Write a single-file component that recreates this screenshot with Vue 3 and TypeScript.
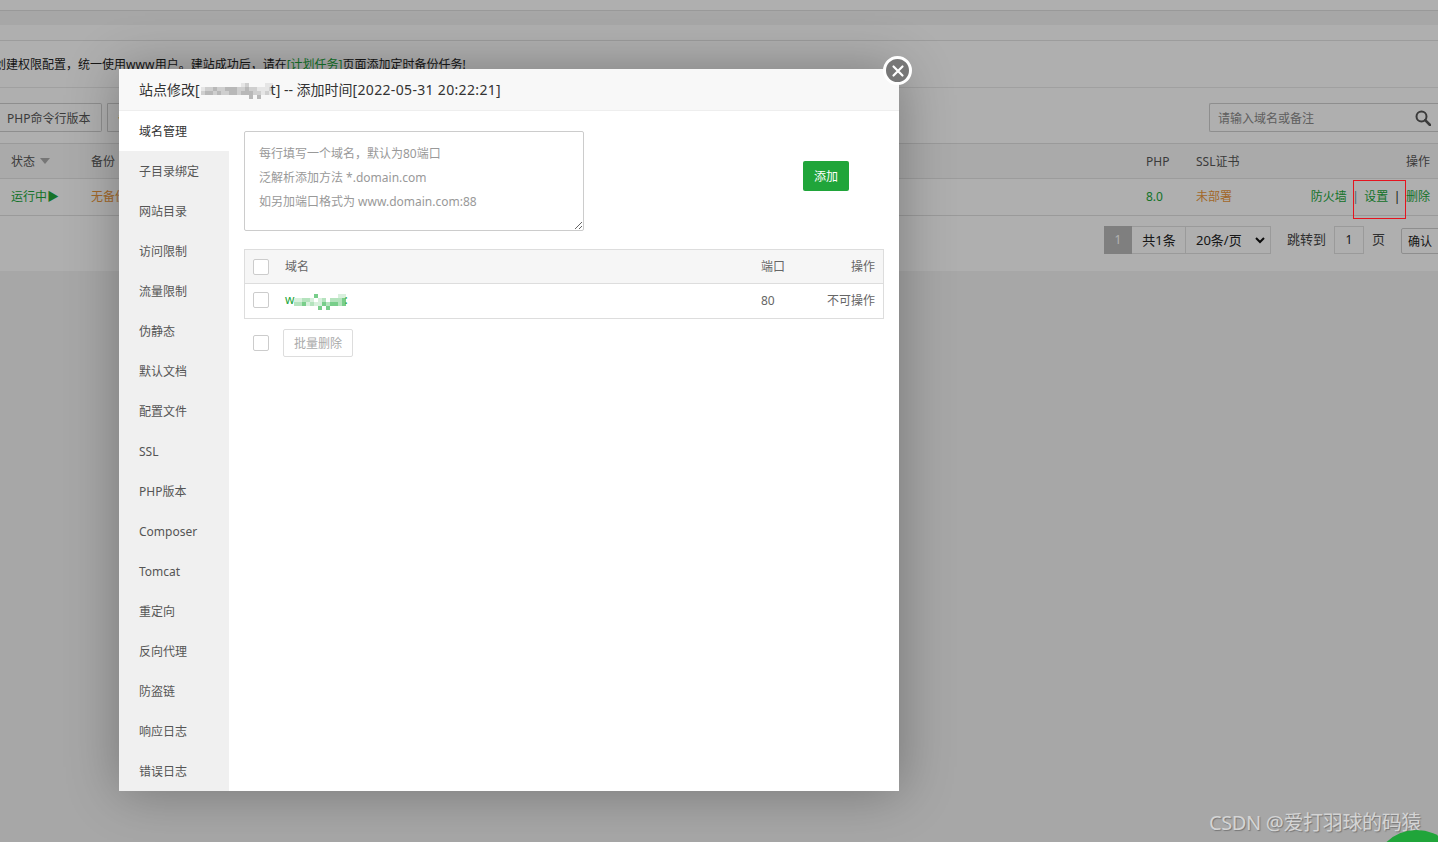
<script setup lang="ts">
const menu: string[] = ['域名管理','子目录绑定','网站目录','访问限制','流量限制','伪静态','默认文档','配置文件','SSL','PHP版本','Composer','Tomcat','重定向','反向代理','防盗链','响应日志','错误日志']
const placeholder = '每行填写一个域名，默认为80端口\n泛解析添加方法 *.domain.com\n如另加端口格式为 www.domain.com:88'

const greys: Record<string, string> = { '.': 'transparent', a: '#e6e6e6', b: '#cfcfcf', c: '#b8b8b8' }
const greens: Record<string, string> = { '.': 'transparent', a: '#d8f0dd', b: '#b4e3bd', c: '#78ce8a' }
const cells = (rows: string[], palette: Record<string, string>): string[] =>
  rows.join('').split('').map((k) => palette[k])
const titleCells = cells(['..........ab....aa', 'abbcbbcccbbcbbaaab', 'bccbcbbccbcccbbaba', '............c.c...'], greys)
const domainCells = cells(['.....c.....aa', 'aabba.ab.bbbc', 'bbcabaacbccbc', '......c.c....'], greens)
</script>

<template>
  <div class="page">
    <div class="strip s1"></div>
    <div class="strip s2"></div>
    <div class="strip s3"></div>
    <div class="notice">创建权限配置，统一使用<span class="www">www</span>用户。建站成功后，请在<span class="link">[计划任务]</span>页面添加定时备份任务!</div>
    <div class="toolbar">
      <div class="tool-btn">PHP命令行版本</div>
      <div class="tool-btn second">备份</div>
      <div class="search">
        <span>请输入域名或备注</span>
        <svg width="16" height="16" viewBox="0 0 16 16" class="search-icon"><circle cx="6.5" cy="6.5" r="5" fill="none" stroke="#555" stroke-width="2"/><path d="M10.2 10.2 15 15" stroke="#555" stroke-width="2.6" stroke-linecap="round"/></svg>
      </div>
    </div>
    <div class="thead">
      <span class="c-status">状态<i class="caret"></i></span>
      <span class="c-backup">备份</span>
      <span class="c-php">PHP</span>
      <span class="c-ssl">SSL证书</span>
      <span class="c-op">操作</span>
    </div>
    <div class="trow">
      <span class="c-status green">运行中▶</span>
      <span class="c-backup orange">无备份</span>
      <span class="c-php green">8.0</span>
      <span class="c-ssl orange">未部署</span>
      <span class="c-op"><span class="green">防火墙</span><span class="sep">|</span><span class="green">设置</span><span class="sep dark">|</span><span class="green">删除</span></span>
    </div>
    <div class="pager">
      <span class="p-cur">1</span>
      <span class="p-total">共1条</span>
      <span class="p-select">20条/页
        <svg width="10" height="7" viewBox="0 0 10 7"><path d="M1 1l4 4 4-4" fill="none" stroke="#111" stroke-width="2"/></svg>
      </span>
      <span class="p-jump">跳转到</span>
      <span class="p-input">1</span>
      <span class="p-unit">页</span>
      <span class="p-ok">确认</span>
    </div>

    <div class="overlay"></div>
    <div class="annot"></div>

    <div class="modal">
      <div class="m-title">站点修改[<span class="mosaic title-mosaic"><i v-for="(c, i) in titleCells" :key="i" :style="{ background: c }"></i></span>t] -- 添加时间<span class="date">[2022-05-31 20:22:21]</span></div>
      <div class="m-body">
        <ul class="side">
          <li v-for="(m, i) in menu" :key="m" :class="{ on: i === 0 }">{{ m }}</li>
        </ul>
        <div class="main">
          <div class="add-row">
            <textarea class="domains" readonly :placeholder="placeholder"></textarea>
            <div class="add-btn">添加</div>
          </div>
          <div class="dtable">
            <div class="d-head">
              <i class="check"></i>
              <span class="d-name">域名</span>
              <span class="d-port">端口</span>
              <span class="d-op">操作</span>
            </div>
            <div class="d-row">
              <i class="check"></i>
              <span class="d-name dom">w<span class="mosaic dom-mosaic"><i v-for="(c, i) in domainCells" :key="i" :style="{ background: c }"></i></span>:</span>
              <span class="d-port">80</span>
              <span class="d-op">不可操作</span>
            </div>
          </div>
          <div class="batch">
            <i class="check"></i>
            <span class="batch-btn">批量删除</span>
          </div>
        </div>
      </div>
    </div>
    <div class="close">
      <svg width="14" height="14" viewBox="0 0 14 14"><path d="M2.5 2.5l9 9M11.5 2.5l-9 9" stroke="#fff" stroke-width="2.2" stroke-linecap="round"/></svg>
    </div>
    <div class="watermark">CSDN @爱打羽球的码猿</div>
    <div class="fab"></div>
  </div>
</template>

<style scoped>
.page {
  position: relative;
  width: 1438px;
  height: 842px;
  overflow: hidden;
  background: #efefef;
  font-family: "Noto Sans", "Noto Sans CJK SC", sans-serif;
  font-size: 12px;
  color: #444;
}
.strip { box-sizing: border-box; }
.s1 { height: 11px; background: #fbfbfb; border-bottom: 1px solid #dcdcdc; }
.s2 { height: 14px; background: #f0f0f0; }
.s3 { height: 16px; background: #fbfbfb; border-bottom: 1px solid #e0e0e0; }
.notice {
  box-sizing: border-box;
  height: 47px;
  padding-top: 15px;
  margin-left: -6px;
  line-height: 18px;
  background: #fbfbfb;
  border-bottom: 1px solid #e6e6e6;
  color: #222;
  white-space: nowrap;
  width: 1444px;
}
.www { letter-spacing: 0.1px; }
.link { color: #20a53a; }
.toolbar {
  box-sizing: border-box;
  height: 56px;
  background: #fbfbfb;
  display: flex;
  align-items: flex-start;
  padding-top: 15px;
  border-bottom: 1px solid #ddd;
}
.tool-btn {
  box-sizing: border-box;
  height: 29px;
  line-height: 29px;
  padding: 0 10px 0 7px;
  border: 1px solid #ccc;
  border-left: 0;
  border-radius: 0 2px 2px 0;
  color: #555;
  width: 102px;
}
.tool-btn.second { margin-left: 5px; width: 60px; border-left: 1px solid #ccc; padding-left: 10px; color: #e8963c; }
.search {
  box-sizing: border-box;
  margin-left: auto;
  width: 229px;
  height: 29px;
  border: 1px solid #ccc;
  border-right: 0;
  border-radius: 2px 0 0 2px;
  display: flex;
  align-items: center;
  justify-content: space-between;
  padding: 0 7px 0 8px;
  color: #888;
}
.thead, .trow {
  box-sizing: border-box;
  display: flex;
  align-items: center;
  padding: 0 8px 0 11px;
  background: #fbfbfb;
}
.thead { height: 35px; background: #f4f4f4; border-bottom: 1px solid #e0e0e0; color: #555; }
.trow { height: 37px; border-bottom: 1px solid #ddd; padding-bottom: 2px; }
.c-status { width: 80px; flex: none; display: flex; align-items: center; }
.c-backup { width: 1055px; flex: none; }
.c-php { width: 50px; flex: none; }
.c-ssl { width: 100px; flex: none; }
.c-op { margin-left: auto; white-space: nowrap; flex: none; }
.caret { width: 0; height: 0; border: 5px solid transparent; border-top: 6px solid #aaa; border-bottom: 0; margin-left: 5px; }
.green { color: #20a53a; }
.orange { color: #e8963c; }
.sep { margin: 0 5.5px; color: #6a8ea0; }
.sep.dark { color: #222; }
.pager {
  box-sizing: border-box;
  height: 55px;
  background: #fbfbfb;
  display: flex;
  align-items: flex-start;
  padding: 10px 0 0 1104px;
  color: #222;
  font-size: 13px;
  white-space: nowrap;
}
.pager > span { flex: none; }
.p-cur, .p-total, .p-select, .p-input {
  box-sizing: border-box;
  height: 28px;
  line-height: 28px;
  text-align: center;
}
.p-cur { width: 28px; background: #b6b6b6; color: #fff; font-size: 12px; }
.p-total { width: 54px; border: 1px solid #ddd; border-left: 0; line-height: 26px; padding-left: 1px; }
.p-select {
  width: 85px;
  border: 1px solid #ddd;
  border-left: 0;
  line-height: 26px;
  display: flex;
  align-items: center;
  justify-content: space-between;
  padding: 0 5px 0 10px;
}
.p-jump { margin-left: 16px; line-height: 26px; color: #444; }
.p-input { width: 30px; margin-left: 8px; border: 1px solid #ddd; line-height: 26px; font-size: 12px; }
.p-unit { margin-left: 8px; line-height: 26px; color: #444; }
.p-ok {
  box-sizing: border-box;
  margin: 2px 0 0 16px;
  width: 50px;
  height: 26px;
  line-height: 26px;
  padding-left: 6px;
  border: 1px solid #ccc;
  border-radius: 2px;
  font-size: 12px;
}
.overlay { position: absolute; inset: 0; background: rgba(0, 0, 0, 0.3); }
.annot {
  position: absolute;
  left: 1353px;
  top: 180px;
  width: 53px;
  height: 39px;
  box-sizing: border-box;
  border: 1px solid #e5141f;
}
.modal {
  position: absolute;
  left: 119px;
  top: 69px;
  width: 780px;
  height: 722px;
  background: #fff;
  box-shadow: 1px 1px 50px rgba(0, 0, 0, 0.3);
  display: flex;
  flex-direction: column;
  overflow: hidden;
}
.m-title {
  box-sizing: border-box;
  height: 42px;
  flex: none;
  line-height: 41px;
  padding-left: 20px;
  background: #f8f8f8;
  border-bottom: 1px solid #eee;
  font-size: 14px;
  color: #333;
  white-space: nowrap;
}
.date { letter-spacing: 0.33px; }
.mosaic {
  display: inline-grid;
  grid-auto-rows: 4px;
}
.mosaic i { display: block; }
.title-mosaic {
  grid-template-columns: repeat(18, 4px);
  vertical-align: 8px;
  margin-left: 1px;
  margin-right: -2px;
}
.dom-mosaic {
  grid-template-columns: repeat(13, 4px);
  vertical-align: 6px;
  margin-right: -2px;
}
.m-body { flex: 1; display: flex; min-height: 0; }
.side {
  list-style: none;
  margin: 0;
  padding: 0;
  width: 110px;
  flex: none;
  background: #f0f0f0;
}
.side li {
  height: 40px;
  line-height: 42px;
  padding-left: 20px;
  color: #555;
}
.side li.on { background: #fff; color: #333; }
.main { flex: 1; padding: 20px 15px 0; }
.add-row { display: flex; align-items: center; }
.domains {
  box-sizing: border-box;
  width: 340px;
  height: 100px;
  margin: 0;
  padding: 10px 14px;
  border: 1px solid #ccc;
  border-radius: 2px;
  font: inherit;
  line-height: 24px;
  outline: none;
  background: #fff;
  display: block;
}
.domains::placeholder { color: #999; opacity: 1; }
.add-btn {
  margin-left: 219px;
  margin-top: -10px;
  width: 46px;
  height: 30px;
  line-height: 31px;
  text-align: center;
  background: #20a53a;
  color: #fff;
  border-radius: 2px;
}
.dtable { margin-top: 18px; border: 1px solid #ddd; }
.d-head, .d-row {
  box-sizing: border-box;
  display: flex;
  align-items: center;
  padding: 0 8px;
  color: #666;
  height: 34px;
}
.d-head { background: #f6f6f6; border-bottom: 1px solid #ddd; }
.d-head .d-port, .d-head .d-op { margin-bottom: 1px; }
.d-row { padding-bottom: 2px; }
.check {
  box-sizing: border-box;
  display: block;
  width: 16px;
  height: 16px;
  border: 1px solid #ccc;
  border-radius: 2px;
  background: #fff;
  flex: none;
}
.d-name { margin-left: 16px; flex: 1; line-height: 18px; }
.dom { color: #20a53a; }
.d-port { width: 66px; flex: none; }
.d-op { width: 48px; flex: none; text-align: right; white-space: nowrap; }
.batch { display: flex; align-items: center; margin-top: 10px; padding-left: 9px; }
.batch-btn {
  box-sizing: border-box;
  margin-left: 14px;
  width: 70px;
  height: 28px;
  line-height: 28px;
  text-align: center;
  border: 1px solid #ddd;
  border-radius: 2px;
  color: #aaa;
}
.close {
  position: absolute;
  left: 883px;
  top: 56px;
  box-sizing: border-box;
  width: 29px;
  height: 29px;
  border-radius: 50%;
  border: 3px solid #fff;
  background: #777;
  display: flex;
  align-items: center;
  justify-content: center;
}
.watermark {
  position: absolute;
  right: 17px;
  top: 810px;
  font-size: 20px;
  letter-spacing: -0.35px;
  line-height: 25px;
  color: #d4d4d4;
  text-shadow: 1px 1px 1px #777;
  white-space: nowrap;
}
.fab {
  position: absolute;
  left: 1373px;
  top: 830px;
  width: 87px;
  height: 87px;
  border-radius: 50%;
  background: #20a53a;
}
</style>
